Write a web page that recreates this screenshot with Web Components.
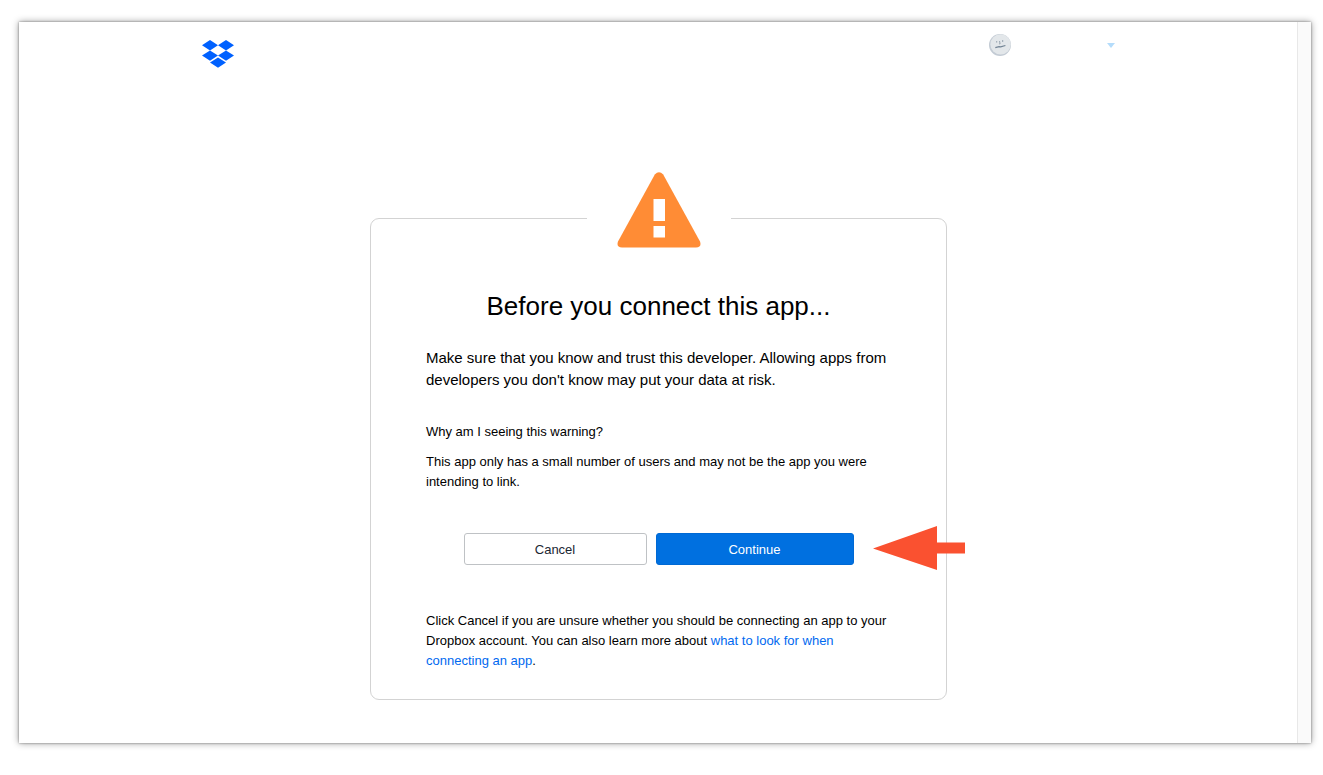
<!DOCTYPE html>
<html lang="en">
<head>
<meta charset="utf-8">
<meta name="viewport" content="width=device-width, initial-scale=1">
<title>Connect app - Dropbox</title>
<style>
    body {
        margin: 0;
        background: #fff;
        color: #000;
        font-family: "Liberation Sans", Arial, sans-serif;
    }
</style>
</head>
<body>
<app-window>
    <site-header></site-header>
    <warning-card>
        <span slot="title">Before you connect this app...</span>
        <span slot="lead">Make sure that you know and trust this developer. Allowing apps from developers you don't know may put your data at risk.</span>
        <span slot="question">Why am I seeing this warning?</span>
        <span slot="answer">This app only has a small number of users and may not be the app you were intending to link.</span>
        <action-button slot="actions">Cancel</action-button>
        <action-button slot="actions" primary>Continue</action-button>
        <pointer-arrow slot="actions"></pointer-arrow>
        <span slot="footer">Click Cancel if you are unsure whether you should be connecting an app to your Dropbox account. You can also learn more about <text-link href="#what-to-look-for">what to look for when connecting an app</text-link>.</span>
    </warning-card>
</app-window>

<script>
function define(name, html, setup) {
    const template = document.createElement('template');
    template.innerHTML = html.trim();

    window.customElements.define(name, class extends HTMLElement {
        constructor() {
            super();
            this.attachShadow({ mode: 'open' });
            this.shadowRoot.appendChild(template.content.cloneNode(true));
        }

        connectedCallback() {
            if (setup) setup(this);
        }
    });
}

define('app-window', `
    <style>
        :host {
            display: flex;
            box-sizing: border-box;
            min-height: 100vh;
            padding: 22px 12px 32px 19px;
        }

        .window {
            flex: 1;
            display: flex;
            background: #fff;
            box-shadow: 0 0 2px rgba(0, 0, 0, 0.4), 0 0 7px rgba(0, 0, 0, 0.4);
        }

        main {
            flex: 1;
            padding: 18px 23px 43px 24px;
        }

        .track {
            width: 13px;
            background: #fafafa;
            border-left: 1px solid #e8e8e8;
        }
    </style>
    <div class="window">
        <main><slot></slot></main>
        <div class="track"></div>
    </div>
`);

define('site-header', `
    <style>
        :host {
            display: block;
        }

        header {
            display: flex;
            align-items: flex-start;
            justify-content: space-between;
            max-width: 913px;
            height: 132px;
            margin: 0 auto;
        }

        svg {
            display: block;
        }

        button {
            display: flex;
            align-items: center;
            justify-content: space-between;
            width: 127px;
            height: 10px;
            padding: 0;
            border: 0;
            background: none;
        }
    </style>
    <header>
        <a href="#home" aria-label="Dropbox">
            <svg width="32" height="28" viewBox="0 0 32 28" fill="#0061ff">
                <path d="M8 0l8 5.2-8 5.2-8-5.2zM24 0l8 5.2-8 5.2-8-5.2zM8 10.4l8 5.2-8 5.2-8-5.2zM24 10.4l8 5.2-8 5.2-8-5.2zM16 17.4l8 5.2-8 5.2-8-5.2z"/>
            </svg>
        </a>
        <button type="button" aria-label="Account menu">
            <svg width="24" height="24" viewBox="0 0 24 24">
                <circle cx="12" cy="12" r="11" fill="#c3cbd4"/>
                <circle cx="12.6" cy="11.4" r="10.2" fill="#e3e7ea"/>
                <path d="M8.7 8v1.6M14.7 7v2M11.5 8l.6 2.8-1 .1" fill="none" stroke="#98a4b0"/>
                <path d="M7.3 14.6l3.7-1 1.7.3 4.7-1.4" fill="none" stroke="#738495" stroke-width="1.2"/>
            </svg>
            <svg width="8" height="5" viewBox="0 0 8 5"><path d="M0 0h8L4 5z" fill="#b4dcfb"/></svg>
        </button>
    </header>
`);

define('warning-icon', `
    <style>
        :host {
            display: block;
        }

        svg {
            display: block;
            margin: 0 auto;
        }
    </style>
    <svg width="84" height="76" viewBox="0 0 84 76" aria-hidden="true">
        <path d="M37.8 2.6Q42-2.2 46.2 2.6L83 69.4Q85 75 79 75.500H5Q-1 75 1 69.4z" fill="#ff8c35"/>
        <path d="M36.500 27h11.500v22H36.500zM36.500 54h11.500v11.500H36.500z" fill="#fff"/>
    </svg>
`);

define('warning-card', `
    <style>
        :host {
            display: block;
        }

        section {
            box-sizing: border-box;
            max-width: 577px;
            margin: 46px auto 0;
            padding: 0 55px 28px;
            border: 1px solid #d3d3d3;
            border-radius: 9px;
            font-size: 13px;
            line-height: 20px;
        }

        /* the icon sits across the top border and hides a part of it */
        warning-icon {
            width: 144px;
            margin: -47px auto 40px;
            background: #fff;
        }

        h1 {
            margin: 0 0 23px;
            font-size: 26px;
            font-weight: 400;
            line-height: 36px;
            text-align: center;
        }

        p {
            margin: 0;
        }

        .lead {
            margin-bottom: 31px;
            font-size: 15px;
            line-height: 22px;
        }

        .question {
            margin-bottom: 10px;
        }

        .actions {
            position: relative;
            display: flex;
            justify-content: center;
            gap: 9px;
            margin: 41px 0 46px;
        }
    </style>
    <section>
        <warning-icon></warning-icon>
        <h1><slot name="title"></slot></h1>
        <p class="lead"><slot name="lead"></slot></p>
        <p class="question"><slot name="question"></slot></p>
        <p><slot name="answer"></slot></p>
        <div class="actions"><slot name="actions"></slot></div>
        <p><slot name="footer"></slot></p>
    </section>
`);

define('action-button', `
    <style>
        :host {
            display: block;
            flex: 0 1 183px;
        }

        :host([primary]) {
            flex-basis: 198px;
        }

        button {
            width: 100%;
            height: 32px;
            padding: 0;
            border: 1px solid #bfc2c5;
            border-radius: 3px;
            background: #fff;
            color: #1b2733;
            font-family: inherit;
            font-size: 13px;
        }

        :host([primary]) button {
            border-color: #0069d4;
            background: #0070e0;
            color: #fff;
        }
    </style>
    <button type="button"><slot></slot></button>
`);

define('pointer-arrow', `
    <style>
        /* lies over the right border of the card */
        :host {
            position: absolute;
            top: -8px;
            right: -74px;
        }

        svg {
            display: block;
        }
    </style>
    <svg width="92" height="46" viewBox="0 0 92 46" aria-hidden="true">
        <path d="M0 23.500L64 1v16.500h28v11H64V45z" fill="#fa5130"/>
    </svg>
`);

define('text-link', `
    <style>
        :host {
            display: inline;
        }

        a {
            color: #0069f0;
            text-decoration: none;
        }
    </style>
    <a><slot></slot></a>
`, (el) => {
    el.shadowRoot.querySelector('a').href = el.getAttribute('href');
});
</script>
</body>
</html>
